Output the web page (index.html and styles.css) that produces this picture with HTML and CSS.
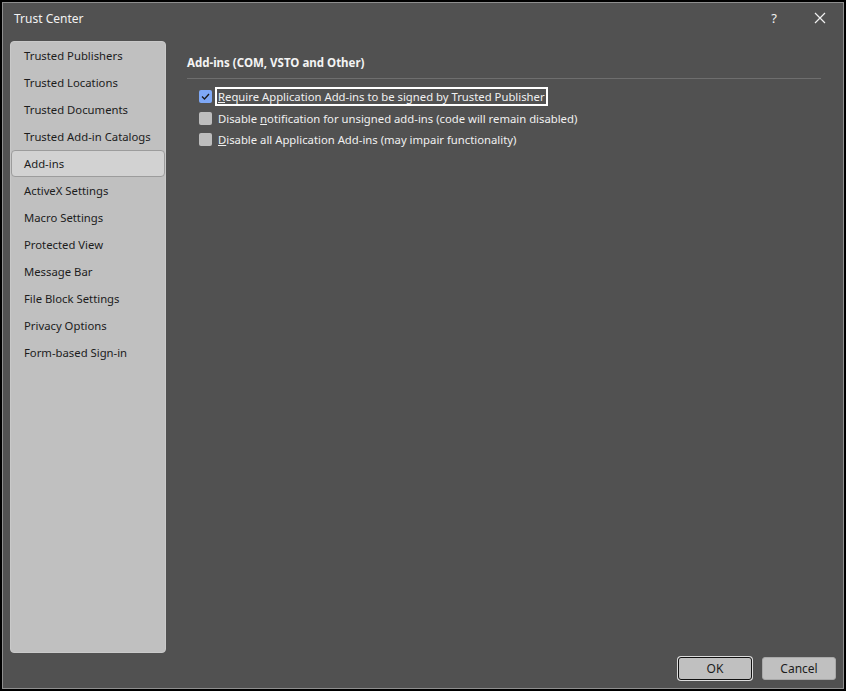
FILE: index.html
```html
<!DOCTYPE html>
<html>
<head>
  <meta charset="utf-8">
  <title>Trust Center</title>
  <link rel="stylesheet" href="styles.css">
</head>
<body>
  <div class="window">
    <div class="titlebar">
      <span class="title">Trust Center</span>
      <span class="help">?</span>
      <span class="close">
        <svg width="12" height="12" viewBox="0 0 12 12"><path d="M1 1L11 11M11 1L1 11" stroke="#f0f0f0" stroke-width="1.2"/></svg>
      </span>
    </div>
    <div class="main">
      <div class="sidebar">
        <div class="nav-item">Trusted Publishers</div>
        <div class="nav-item">Trusted Locations</div>
        <div class="nav-item">Trusted Documents</div>
        <div class="nav-item">Trusted Add-in Catalogs</div>
        <div class="nav-item selected">Add-ins</div>
        <div class="nav-item">ActiveX Settings</div>
        <div class="nav-item">Macro Settings</div>
        <div class="nav-item">Protected View</div>
        <div class="nav-item">Message Bar</div>
        <div class="nav-item">File Block Settings</div>
        <div class="nav-item">Privacy Options</div>
        <div class="nav-item">Form-based Sign-in</div>
      </div>
      <div class="content">
        <h3 class="section-title">Add-ins (COM, VSTO and Other)</h3>
        <div class="options">
          <div class="option">
            <span class="box checked">
              <svg width="9" height="7" viewBox="0 0 9 7"><path d="M1 3.5L3.5 6L8 1" fill="none" stroke="#1b1b1b" stroke-width="1.3"/></svg>
            </span>
            <span class="label focused"><u>R</u>equire Application Add-ins to be signed by Trusted Publisher</span>
          </div>
          <div class="option">
            <span class="box"></span>
            <span class="label">Disable <u>n</u>otification for unsigned add-ins (code will remain disabled)</span>
          </div>
          <div class="option">
            <span class="box"></span>
            <span class="label"><u>D</u>isable all Application Add-ins (may impair functionality)</span>
          </div>
        </div>
      </div>
    </div>
    <div class="footer">
      <div class="btn default">OK</div>
      <div class="btn">Cancel</div>
    </div>
  </div>
</body>
</html>
```

FILE: styles.css
```css
html, body {
    margin: 0;
    background-color: #000;
    font-family: "Noto Sans", sans-serif;
    font-size: 11.3px;
}
.window {
    box-sizing: border-box;
    width: 842px;
    height: 687px;
    margin: 2px;
    border: 1px solid #8e8e8e;
    background-color: #515151;
    display: flex;
    flex-direction: column;
}
.titlebar {
    height: 38px;
    display: flex;
    align-items: flex-start;
    padding: 7px 0 0 11px;
    box-sizing: border-box;
    color: #f2f2f2;
    font-size: 12px;
}
.title { flex: 1; }
.help {
    font-size: 13px;
    width: 46px;
    text-align: center;
    line-height: 16px;
}
.close {
    width: 46px;
    height: 16px;
    display: flex;
    align-items: center;
    justify-content: center;
}
.main {
    flex: 1;
    display: flex;
    padding: 0 0 0 7px;
}
.sidebar {
    width: 154px;
    background-color: #c0c0c0;
    border: 1px solid #c9c9c9;
    border-radius: 4px;
}
.nav-item {
    height: 27px;
    line-height: 27px;
    padding-left: 13px;
    color: #1c1c1c;
    box-sizing: border-box;
}
.nav-item.selected {
    background-color: #d2d2d2;
    border: 1px solid #9c9c9c;
    border-radius: 4px;
    line-height: 25px;
    padding-left: 12px;
}
.content {
    flex: 1;
    padding: 0 22px 0 21px;
}
.section-title {
    margin: 0;
    padding-top: 14px;
    height: 23px;
    line-height: 16px;
    font-size: 11.5px;
    font-weight: bold;
    color: #f4f4f4;
    border-bottom: 1px solid #6e6e6e;
}
.options {
    padding: 7px 0 0 12px;
}
.option {
    display: flex;
    align-items: center;
    height: 21.5px;
    color: #f0f0f0;
}
.box {
    width: 13px;
    height: 13px;
    border-radius: 2px;
    background-color: #bdbdbd;
    margin-right: 4px;
    display: flex;
    align-items: center;
    justify-content: center;
}
.box.checked { background-color: #7ea8f6; }
.label {
    padding: 0 1px;
    border: 1px solid transparent;
    line-height: 15px;
}
.label.focused { border-color: #fff; outline: 1px solid #fff; }
.footer {
    box-sizing: border-box;
    height: 35px;
    display: flex;
    justify-content: flex-end;
    align-items: flex-start;
    gap: 10px;
    padding: 4px 7px 0 0;
}
.btn {
    box-sizing: border-box;
    width: 74px;
    height: 23px;
    line-height: 21px;
    text-align: center;
    background-color: #c0c0c0;
    border: 1px solid #a9a9a9;
    border-radius: 3px;
    color: #1c1c1c;
    font-size: 12px;
}
.btn.default {
    border: 1px solid #111;
    box-shadow: 0 0 0 1px #dcdcdc;
}
```
